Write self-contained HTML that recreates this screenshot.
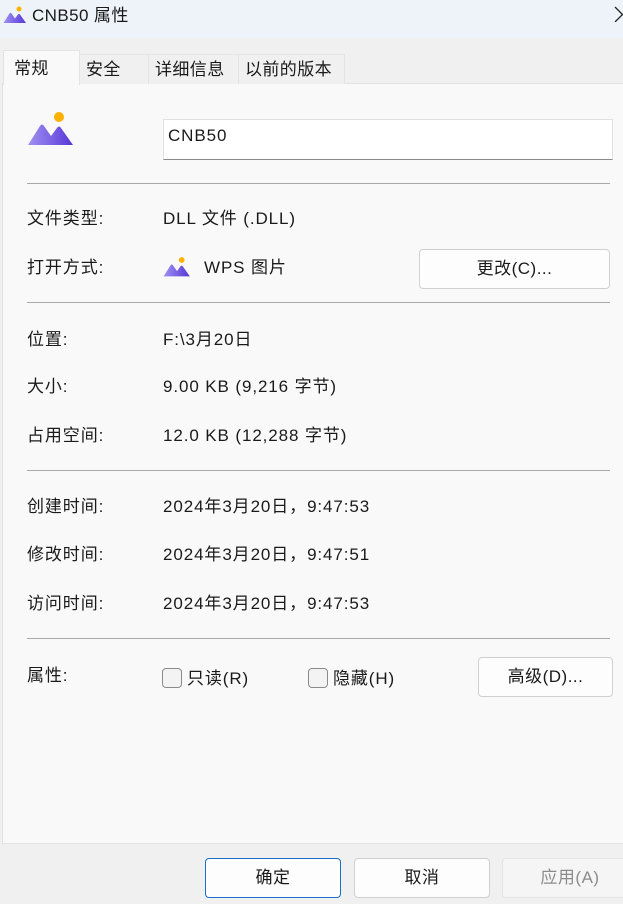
<!DOCTYPE html>
<html><head><meta charset="utf-8"><style>
*{margin:0;padding:0;box-sizing:border-box}
body{width:623px;height:904px;background:#f0f0f0;font-family:"Liberation Sans","Noto Sans CJK SC",sans-serif;font-size:17px;letter-spacing:0.9px;color:#1a1a1a;position:relative;overflow:hidden}
.a{position:absolute;white-space:nowrap;line-height:22px}
.title{position:absolute;left:0;top:0;width:623px;height:38px;background:#eef3f9}
.tab{position:absolute;top:54px;height:30px;background:#f0f0f0;border:1px solid #e3e3e3;border-bottom:none;padding:4px 0 0 6px;font-size:17px;line-height:22px;letter-spacing:0.4px}
.panel{position:absolute;left:2px;top:83px;width:640px;height:761px;background:#f9f9f9;border:1px solid #e2e2e2}
.hr{position:absolute;left:27px;width:583px;height:1px;background:#a8a8a8}
.btn{position:absolute;background:#fdfdfd;border:1px solid #d0d0d0;border-radius:4px;text-align:center;line-height:38px;letter-spacing:0.5px}
.cb{position:absolute;width:20px;height:20px;border:1px solid #8a8a8a;border-radius:4px;background:#f3f3f3}
</style></head><body>
<div class="title"></div>
<svg class="a" style="left:3px;top:5px" width="24" height="20" viewBox="0 0 48 36"><defs><linearGradient id="g2" x1="0" x2="1"><stop offset="0" stop-color="#a290f2"/><stop offset="1" stop-color="#5637d6"/></linearGradient></defs><circle cx="32" cy="6" r="5" fill="#ffb000"/><path d="M1 34 L13 15 Q15 12 17 15 L24 25 L30 17 Q32 14 34 17 L46 34 Z" fill="url(#g2)"/></svg>
<div class="a" style="left:32px;top:5px;font-size:17px;letter-spacing:0.4px">CNB50 属性</div>
<svg class="a" style="left:614px;top:6px" width="9" height="16" viewBox="0 0 9 16"><path d="M1 1 L9 9 M1 16 L9 8" stroke="#222" stroke-width="1.3" fill="none"/></svg>
<div class="panel"></div>
<div class="tab" style="left:79px;width:70px">安全</div>
<div class="tab" style="left:148px;width:91px">详细信息</div>
<div class="tab" style="left:238px;width:107px">以前的版本</div>
<div class="tab" style="left:3px;top:50px;height:35px;width:77px;background:#f9f9f9;padding-top:7px;padding-left:10px">常规</div>
<svg class="a" style="left:27px;top:111px" width="48" height="36" viewBox="0 0 48 36"><circle cx="32" cy="6" r="5" fill="#ffb000"/><path d="M1 34 L13 15 Q15 12 17 15 L24 25 L30 17 Q32 14 34 17 L46 34 Z" fill="url(#g2)"/></svg>
<div class="a" style="left:163px;top:119px;width:450px;height:41px;background:#fff;border:1px solid #e0e0e0;border-bottom:1px solid #8a8a8a;padding:5px 4px;font-size:17px">CNB50</div>
<div class="hr" style="top:183px"></div>
<div class="a" style="left:27px;top:208px">文件类型:</div><div class="a" style="left:163px;top:208px">DLL 文件 (.DLL)</div>
<div class="a" style="left:27px;top:257px">打开方式:</div>
<svg class="a" style="left:163px;top:256px" width="28" height="22" viewBox="0 0 48 36"><circle cx="32" cy="6" r="5" fill="#ffb000"/><path d="M1 34 L13 15 Q15 12 17 15 L24 25 L30 17 Q32 14 34 17 L46 34 Z" fill="url(#g2)"/></svg>
<div class="a" style="left:204px;top:257px">WPS 图片</div>
<div class="btn" style="left:419px;top:249px;width:191px;height:40px">更改(C)...</div>
<div class="hr" style="top:302px"></div>
<div class="a" style="left:27px;top:329px">位置:</div><div class="a" style="left:163px;top:329px">F:\3月20日</div>
<div class="a" style="left:27px;top:376px">大小:</div><div class="a" style="left:163px;top:376px">9.00 KB (9,216 字节)</div>
<div class="a" style="left:27px;top:425px">占用空间:</div><div class="a" style="left:163px;top:425px">12.0 KB (12,288 字节)</div>
<div class="hr" style="top:470px"></div>
<div class="a" style="left:27px;top:496px">创建时间:</div><div class="a" style="left:163px;top:496px">2024年3月20日，9:47:53</div>
<div class="a" style="left:27px;top:544px">修改时间:</div><div class="a" style="left:163px;top:544px">2024年3月20日，9:47:51</div>
<div class="a" style="left:27px;top:593px">访问时间:</div><div class="a" style="left:163px;top:593px">2024年3月20日，9:47:53</div>
<div class="hr" style="top:638px"></div>
<div class="a" style="left:27px;top:665px">属性:</div>
<div class="cb" style="left:162px;top:668px"></div><div class="a" style="left:187px;top:668px">只读(R)</div>
<div class="cb" style="left:308px;top:668px"></div><div class="a" style="left:333px;top:668px">隐藏(H)</div>
<div class="btn" style="left:478px;top:657px;width:135px;height:40px">高级(D)...</div>
<div class="btn" style="left:205px;top:858px;width:136px;height:40px;border-color:#1a6fc9">确定</div>
<div class="btn" style="left:354px;top:858px;width:136px;height:40px">取消</div>
<div class="btn" style="left:502px;top:858px;width:136px;height:40px;background:#f5f5f5;border-color:#e4e4e4;color:#8c8c8c">应用(A)</div>
</body></html>
